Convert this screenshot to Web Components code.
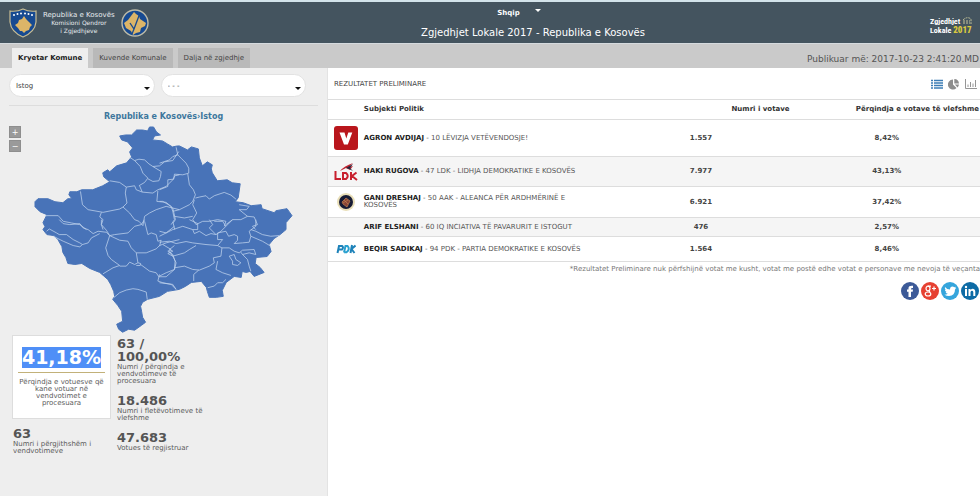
<!DOCTYPE html>
<html lang="sq">
<head>
<meta charset="utf-8">
<title>Zgjedhjet Lokale 2017</title>
<style>
html,body{margin:0;height:100%}
body{font-family:"DejaVu Sans",Verdana,sans-serif;font-size:7px;color:#444;background:#fff;overflow-x:hidden}
</style>
</head>
<body>
<results-app></results-app>
<script>
const define=(name,html,setup)=>customElements.define(name,class extends HTMLElement{
  constructor(){super();this.attachShadow({mode:'open'});}
  connectedCallback(){
    if(this.shadowRoot.childNodes.length)return;
    const t=document.createElement('template');
    t.innerHTML=typeof html==='function'?html(this):html;
    this.shadowRoot.append(t.content.cloneNode(true));
    if(setup)setup(this);
  }
});

define('site-header',`
<style>
:host{display:grid;grid-template-columns:152px 1fr 66px;box-sizing:border-box;height:44px;background:#44545f;border-top:2px solid #d3e3ea;border-bottom:1px solid #d5dade;color:#fff}
.brand{display:flex;align-items:center;gap:6px;padding-left:9px}
.brand p{margin:0;text-align:center;line-height:8px;font-size:6px;color:#e6ebee;white-space:nowrap}
.brand strong{font-weight:400;font-size:7px}
svg{display:block;flex:none}
.mid{display:flex;flex-direction:column;align-items:center;gap:8px;padding-top:6px}
button{display:flex;gap:15px;margin:0 0 0 -28px;padding:0;border:0;background:none;color:#fff;font:bold 7px/10px "DejaVu Sans",Verdana,sans-serif}
button i{width:0;height:0;margin-top:1px;border:3px solid transparent;border-top-color:#fff;border-bottom:0}
h1{margin:0;font-weight:400;font-size:10px;line-height:14px;white-space:nowrap}
.logo{display:flex;flex-direction:column;justify-content:center;padding:6px 0 0 16px;font:bold 8px/9px "Roboto Condensed","Liberation Sans Narrow",sans-serif}
.logo div{display:flex;gap:2px}
.logo b{color:#d9c840;font-size:9px}
</style>
<div class="brand">
<svg width="28" height="30" viewBox="0 0 28 30"><path d="M1 3Q8 4 14 1Q20 4 27 3V14Q26 24 14 29Q2 24 1 14Z" fill="#174a91" stroke="#c9bd93" stroke-width="1.2"/><path d="M6 17l3-2 1-3 3-1 2-3 2 3 3 3 3 3-2 2-1 3-3 1-2 2-2-2-2 0-2-3z" fill="#dcb568"/><g fill="#fff"><circle cx="5" cy="7" r="1"/><circle cx="8.500" cy="6" r="1"/><circle cx="12" cy="5.500" r="1"/><circle cx="16" cy="5.500" r="1"/><circle cx="19.500" cy="6" r="1"/><circle cx="23" cy="7" r="1"/></g></svg>
<p><strong>Republika e Kosovës</strong><br>Komisioni Qendror<br>i Zgjedhjeve</p>
<svg width="28" height="30" viewBox="0 0 28 30"><circle cx="14" cy="15" r="13" fill="#174a91" stroke="#bdbba8" stroke-width="1.400"/><path d="M3 15l4-3 3-4 3-4 2 2 3 2 1 3 6 4-1 3-4 2-1 4-4 1-3 2-2-4-5-3z" fill="#dcb568"/><path d="M9 15l4 6 6-16M13 21l-2 5" fill="none" stroke="#174a91" stroke-width="1.300"/></svg>
</div>
<div class="mid"><button type="button">Shqip<i></i></button><h1>Zgjedhjet Lokale 2017 - Republika e Kosovës</h1></div>
<div class="logo"><div>Zgjedhjet<svg width="11" height="8" viewBox="0 0 11 8"><path d="M1 3Q5-1 9 2V7M1 4h7M1 6h7" fill="none" stroke="#c4c39a" stroke-dasharray="2 1"/></svg></div><div>Lokale<b>2017</b></div></div>`);

define('tab-bar',`
<style>
:host{display:flex;align-items:flex-end;justify-content:space-between;box-sizing:border-box;height:24px;background:#cacaca;padding-left:12px}
nav{display:flex;gap:5px}
time{font-size:9px;line-height:17px;color:#555;white-space:nowrap;padding-right:1px}
</style><nav><slot></slot></nav><time>Publikuar më: 2017-10-23 2:41:20.MD</time>`);

define('tab-link',`
<style>
a{display:block;padding:0 6px;font-size:7px;line-height:20px;color:#444;background:#b9b9b9;text-decoration:none;white-space:nowrap}
:host([active]) a{background:#eee;font-weight:700;color:#222}
</style><a href="#"><slot></slot></a>`);

define('pick-list',el=>`
<style>
:host{display:block;flex:1;position:relative}
select{appearance:none;display:block;width:100%;height:23px;border:1px solid #e2e2e2;border-radius:12px;background:#fff;padding:0 6px;color:#444;font:7px "DejaVu Sans",Verdana,sans-serif}
i{position:absolute;right:5px;top:13px;border:3px solid transparent;border-top-color:#111;border-bottom:0}
</style><select aria-label="${el.getAttribute('label')}"><option>${el.getAttribute('value')}</option></select><i></i>`);

define('kosovo-map',`
<style>
:host{display:grid;grid-template-columns:23px 1fr;align-items:start;padding:2px 33px 0 9px}
.zoom{display:flex;flex-direction:column;gap:2px}
button{width:12px;height:12px;padding:0;border:1px solid #8e8e8e;background:#9a9a9a;color:#fff;font:8px/9px "DejaVu Sans",sans-serif}
svg{display:block;width:100%}
</style>
<div class="zoom"><button type="button" aria-label="Zmadho">+</button><button type="button" aria-label="Zvogëlo">−</button></div>
<svg viewBox="32 126 263 209" role="img" aria-label="Harta e Kosovës">
<path fill="#4873b8" stroke="#4873b8" stroke-width="1" stroke-linejoin="round" d="M120 136L126 135 132 135 137 130 143 130 148 131 150 127 154 127 157 132 161 135 155 136 153 140 163 141 168 144 173 147 178 146 180 146 188 150 192 147 199 149 200 158 203 166 208 162 213 165 212 169 213 173 218 181 228 180 233 183 241 184 239 198 236 202 244 203 252 206 262 205 263 209 275 213 277 211 288 209 293 216 287 223 287 230 281 235 275 239 270 245 272 252 268 257 257 258 256 264 261 268 265 273 255 277 251 272 247 273 243 272 242 278 235 277 227 283 223 291 224 297 217 298 210 298 208 292 207 288 202 282 192 283 186 287 180 290 168 292 160 297 148 300 143 303 141 307 142 312 143 318 146 323 142 326 135 331 129 330 123 333 119 330 117 325 123 322 122 312 118 306 113 300 115 297 114 292 111 285 108 280 100 273 90 269 82 264 75 265 68 264 66 258 63 253 62 247 58 240 54 236 47 235 43 230 45 227 43 223 47 215 40 212 35 207 35 202 38 199 48 199 55 202 63 203 68 199 72 199 69 195 70 192 77 192 82 190 93 190 103 186 110 182 104 177 103 173 108 170 110 172 117 166 127 163 132 157 130 152 133 148 128 142 122 140Z"/>
<g fill="none" stroke="#bfd2ec" stroke-width="2.300" stroke-linejoin="round">
<g transform="translate(20 110) scale(.33333)"><path d="M330 142L345 152 358 148 375 150 388 162 400 170 420 168 435 156 460 152 478 125M345 152L362 170 370 190 385 205 375 218 358 228M400 170L425 185 423 200 418 213 400 215 385 207M270 213L300 218 320 232 345 228 350 240 368 247 360 228M368 247L400 250 415 240 440 230 460 210 466 198 480 195M320 232L317 250 322 280 310 292 300 298 250 308 205 300 188 285 182 245M415 243L412 275 440 278 460 295 480 300M310 292L330 310 345 330 358 335 370 348 375 320 390 310 410 300 440 290 460 295M75 318L115 318 130 335 155 340 180 345 200 360M245 308L240 322 250 330 245 345 250 360M460 295L468 330 461 340 466 360"/></g>
<g transform="translate(160 110) scale(.33333)"><path d="M0 160L15 155 30 150 40 140 55 135 50 112M55 135L65 145 80 160 88 175 88 190 70 195 45 193 43 208 25 210 25 230 0 240M85 192L90 225 102 240 108 255 100 275 90 285 60 300 40 305 35 290 10 275 0 275M108 265L120 262 140 258 150 268 165 258 195 248 215 256 230 268M105 270L100 285 112 310 100 330 110 345 130 335 150 335 175 330 200 335 195 350M240 285L270 290 262 300 240 300 265 320 245 330 220 330 200 345M265 320L285 322 295 345 280 350 290 360M40 305L45 330 35 345M45 320L75 325 100 320"/></g>
<g transform="translate(20 220) scale(.33333)"><path d="M245 0L245 15 260 32 270 48 260 38 235 35 220 42 205 30 190 25 180 12 150 15 130 12 118 0M270 48L285 45 325 40 345 20 365 15 375 0M80 35L88 28 110 40 118 45 140 45 160 60 180 70 188 75 205 70 215 55 240 42M100 50L130 65 160 78 180 82 188 75M270 48L258 85 265 108 275 120 300 138 280 145 250 163M270 48L300 62 325 65 335 85 350 100 380 100 410 88 420 78 440 70 480 60M350 100L355 130 345 135 330 128 320 140 300 140M355 130L363 132 362 138 350 138M363 135L390 155 410 160 418 172 440 172 465 150 470 130 460 110 445 102 460 95 450 90 465 78M375 5L385 45 395 40 410 45 415 65 425 62 420 80M420 35L440 40 465 20M420 165L415 185 430 190 455 195 470 210M282 235L300 220 320 212 340 208 355 210 380 218 383 240"/></g>
<g transform="translate(160 220) scale(.33333)"><path d="M0 50L40 30 70 20 100 30 105 42 120 35 140 48 155 42 170 45 185 35 200 20 220 0M0 68L30 65 50 72 80 66 100 70 140 75 175 78 190 60 175 60 175 40 200 35M30 95L40 110 75 100 90 90 110 78M0 170L20 160 45 150 47 125 40 105 25 95 35 90 10 75M45 145L75 140 100 150 120 152 150 140 165 130 162 115 185 110 188 85 175 78M118 152L103 165 103 185M175 125L170 150 190 160 215 168M145 205L165 200 175 190 190 190 200 180M90 0L115 12 115 30 100 30M150 0L160 15 150 25 170 45M165 5L190 5 200 20M200 35L208 50 225 45 235 50 235 62 225 72 250 70 270 68 275 50 270 35 290 20 290 0M275 30L290 35 310 45 335 50 360 48M275 50L310 65 335 80M188 85L210 85 225 95 240 100 250 92 285 90 290 105 270 100 250 105 245 98M250 105L265 120 270 140 275 155M210 110L225 105 230 120 245 130 235 138 220 135 220 125ZM0 190L40 195 50 210"/></g>
</g></svg>`);

define('stat-item',`
<style>
:host{display:block;color:#5c5c5c;line-height:7px;font-size:7px}
strong{display:block;margin-bottom:1px;font-size:13px;line-height:13px;color:#555}
:host([card]){box-sizing:border-box;min-height:84px;padding:11px 5px;background:#fff;border:1px solid #ddd;text-align:center}
:host([card]) strong{padding-bottom:4px;margin-bottom:6px;border-bottom:1px solid #c2b179;font-size:19px;line-height:21px}
:host([card]) strong span{display:inline-block;background:#4f8ff7;color:#fff}
</style><strong><span><slot name="value"></slot></span></strong><slot></slot>`);

define('side-panel',`
<style>
:host{display:block;background:#eee;border-right:1px solid #e3e3e3;box-sizing:border-box}
.picks{display:flex;gap:6px;margin:0 9px;padding:6px 12px 8px 0;border-bottom:1px solid #ddd}
h2{margin:0;padding:5px 0 2px;text-align:center;font-size:8px;line-height:11px;color:#3d779d}
h2 a{color:inherit;text-decoration:none}
.stats{display:grid;grid-template-columns:99px 92px;column-gap:5px;padding:1px 12px 0}
.col{display:flex;flex-direction:column;gap:8px}
.col stat-item:not([card]){padding-left:1px}
.b{gap:9px;padding-top:2px}
</style>
<div class="picks"><pick-list label="Komuna" value="Istog"></pick-list><pick-list label="Vendvotimi" value="- - -"></pick-list></div>
<h2><a href="#">Republika e Kosovës</a>›<a href="#">Istog</a></h2>
<kosovo-map></kosovo-map>
<div class="stats">
<div class="col"><stat-item card><span slot="value">41,18%</span>Përqindja e votuesve që kane votuar në vendvotimet e procesuara</stat-item>
<stat-item><span slot="value">63</span>Numri i përgjithshëm i vendvotimeve</stat-item></div>
<div class="col b"><stat-item><span slot="value">63 / 100,00%</span>Numri / përqindja e vendvotimeve të procesuara</stat-item>
<stat-item><span slot="value">18.486</span>Numri i fletëvotimeve të vlefshme</stat-item>
<stat-item><span slot="value">47.683</span>Votues të regjistruar</stat-item></div>
</div>`);

const logos={
v:`<svg width="24" height="24" viewBox="0 0 24 24"><rect width="24" height="24" rx="3" fill="#b9161c"/><path d="M5.500 6.500h5l1.800 6 2-6h4l-4.500 12h-3.800z" fill="#fff"/></svg>`,
ldk:`<svg width="24" height="18" viewBox="0 0 24 18"><path d="M6 8Q10 3 19 0L15 4 19 3 16 7 12 5Z" fill="#c22733"/><path d="M12 5l7-4-3 4 3 3-4-2z" fill="#23283d"/><path d="M1.500 8v8H7M9 10h3q3.500 3 0 6H9zM17 9v8M22.500 9.500L18 13l5 4" fill="none" stroke="#c8202e" stroke-width="2"/></svg>`,
aak:`<svg width="20" height="20" viewBox="0 0 20 20"><circle cx="10" cy="10" r="9" fill="#e9dfb8"/><circle cx="10" cy="10" r="7" fill="#171b35"/><path d="M6 10l4-4 4 3-3 6-4-3zM8 8l4 4M7 11l5-3" fill="#8a4436" stroke="#c08450" stroke-width=".7"/></svg>`,
none:'',
pdk:`<svg width="20" height="10" viewBox="0 0 20 10"><g fill="none" stroke="#1d82b9" stroke-width="2"><path d="M1.500 9L3 2h3q2 1 0 3.500H3"/><path d="M8 8.500L9.500 2h2q3 3-1 6.200H8" stroke="#28a0cf"/><path d="M14.500 9L16 1M19.500 1.500L15.500 5l3 4"/></g></svg>`};
const rows=[
['v','AGRON AVDIJAJ','10 LËVIZJA VETËVENDOSJE!','1.557','8,42%',37],
['ldk','HAKI RUGOVA','47 LDK - LIDHJA DEMOKRATIKE E KOSOVËS','7.977','43,13%',30],
['aak','GANI DRESHAJ','50 AAK - ALEANCA PËR ARDHMËRINË E KOSOVËS','6.921','37,42%',31],
['none','ARIF ELSHANI','60 IQ INCIATIVA TË PAVARURIT E ISTOGUT','476','2,57%',19],
['pdk','BEQIR SADIKAJ','94 PDK - PARTIA DEMOKRATIKE E KOSOVËS','1.564','8,46%',25]];

define('results-table',`
<style>
:host{display:block}
table{width:100%;table-layout:fixed;border-collapse:collapse;font-size:7px;line-height:7px;color:#444}
col:nth-child(1){width:5.5%}col:nth-child(2){width:37.5%}col:nth-child(3){width:28.4%}
th,td{padding:0;border-top:1px solid #ddd}
thead th{height:19px;text-align:right;color:#333;white-space:nowrap}
thead th:nth-child(3){padding-right:4px}
thead th:nth-child(2){text-align:left}
thead th:last-child{padding-right:1px}
tbody td{text-align:center;font-weight:700}
tbody td:nth-child(2){padding-right:20px;text-align:left;font-weight:400;color:#555}
tbody b{color:#222}
tbody tr:nth-child(even){background:#f5f5f5}
tbody tr:last-child td{border-bottom:1px solid #ddd}
svg{display:block;margin:auto}
</style>
<table><colgroup><col><col><col><col></colgroup>
<thead><tr><th></th><th scope="col">Subjekti Politik</th><th scope="col">Numri i votave</th><th scope="col">Përqindja e votave të vlefshme</th></tr></thead>
<tbody>${rows.map(r=>`<tr style="height:${r[5]}px"><td>${logos[r[0]]}</td><td><b>${r[1]}</b> - ${r[2]}</td><td>${r[3]}</td><td>${r[4]}</td></tr>`).join('')}</tbody></table>`);

define('share-links',`
<style>
:host{display:flex;justify-content:flex-end;gap:2px;padding:8px 1px}
a{display:block}svg{display:block}
</style>
<a href="#" aria-label="Facebook"><svg width="18" height="18" viewBox="0 0 18 18"><circle cx="9" cy="9" r="9" fill="#3c5a98"/><path d="M7.500 15V9.800H6V7.500h1.500V6Q7.700 3.300 12 3.800v2.100h-1.200q-.9 0-.8 1.600h2l-.3 2.300H10V15z" fill="#fff"/></svg></a>
<a href="#" aria-label="Google Plus"><svg width="18" height="18" viewBox="0 0 18 18"><circle cx="9" cy="9" r="9" fill="#e64132"/><g fill="none" stroke="#fff" stroke-width="1.200"><ellipse cx="7" cy="6.500" rx="2" ry="2.300"/><ellipse cx="7" cy="12" rx="2.800" ry="2"/><path d="M7 4.200h3M8 8.500l1 2M11 6.500h4M13 4.500v4"/></g></svg></a>
<a href="#" aria-label="Twitter"><svg width="18" height="18" viewBox="0 0 18 18"><circle cx="9" cy="9" r="9" fill="#35a5dc"/><path d="M4 5q2 2.500 5 2.500Q9 4.500 11.500 4.500q1 0 1.800.8L15 4.800 14 6.300l1.300-.2L14 7.500Q14 13.500 8 14 5.500 14 3.500 12.800q2 0 3.300-1Q5 11.500 4.600 10h1Q3.800 9.300 3.900 7.500l1 .3Q3.300 6.500 4 5z" fill="#fff"/></svg></a>
<a href="#" aria-label="LinkedIn"><svg width="18" height="18" viewBox="0 0 18 18"><circle cx="9" cy="9" r="9" fill="#0d6ba5"/><path d="M4 7h2v7H4zM7.500 7h2v1q2-2 4-.5.800.8.800 2.500v4h-2v-4Q12 8.700 11 8.700T9.500 10v4h-2z" fill="#fff"/><circle cx="5" cy="5" r="1.200" fill="#fff"/></svg></a>`);

define('results-panel',`
<style>
:host{display:block;min-width:0;background:#fff}
header{display:flex;align-items:center;justify-content:space-between;height:31px;padding:0 3px 0 6px}
h2{margin:0;font-weight:400;font-size:7px;color:#444}
.views{display:flex;gap:5px}
button{padding:0;border:0;background:none}svg{display:block}
p{margin:0;padding:3px 0 0;text-align:right;font-size:7px;line-height:9px;color:#777;white-space:nowrap}
</style>
<header><h2>REZULTATET PRELIMINARE</h2><div class="views">
<button type="button" aria-label="Lista"><svg width="12" height="12" viewBox="0 0 12 12"><path d="M0 2.500h2M3 2.500h9M0 5h2M3 5h9M0 7.500h2M3 7.500h9M0 10h2M3 10h9" stroke="#3d7db5" stroke-width="1.400"/></svg></button>
<button type="button" aria-label="Grafik rrethor"><svg width="12" height="12" viewBox="0 0 12 12"><path d="M5 1.500v5l3.500 3.500A5 5 0 1 1 5 1.500zM6.300 1a5 5 0 0 1 4.700 4.500H6.300zM6.800 6.600H11a5 5 0 0 1-1.400 2.800z" fill="#8d8d8d"/></svg></button>
<button type="button" aria-label="Grafik me shtylla"><svg width="12" height="12" viewBox="0 0 12 12"><path d="M.5 1v9.500H12M3 9V6.500M5.500 9V4M8 9V5.500M10.500 9V2" fill="none" stroke="#969696"/></svg></button>
</div></header>
<results-table></results-table>
<p>*Rezultatet Preliminare nuk përfshijnë votat me kusht, votat me postë edhe votat e personave me nevoja të veçanta</p>
<share-links></share-links>`);

define('results-app',`
<style>
:host{display:flex;flex-direction:column;min-height:100vh}
main{flex:1;display:grid;grid-template-columns:minmax(0,328fr) minmax(0,652fr)}
</style>
<site-header></site-header>
<tab-bar><tab-link active>Kryetar Komune</tab-link><tab-link>Kuvende Komunale</tab-link><tab-link>Dalja në zgjedhje</tab-link></tab-bar>
<main><side-panel></side-panel><results-panel></results-panel></main>`);
</script>
</body>
</html>
